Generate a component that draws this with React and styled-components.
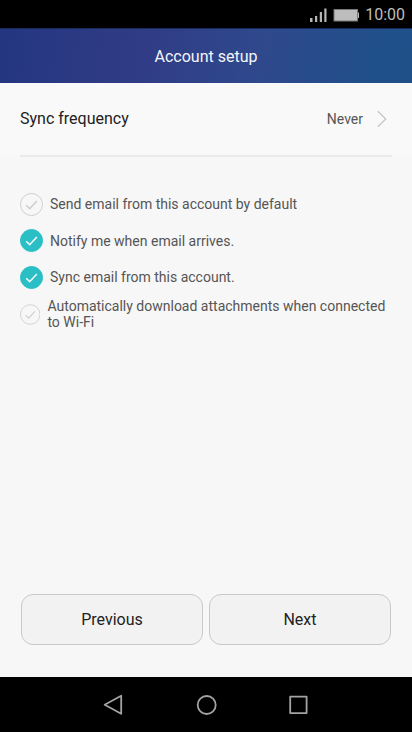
import React, { useState } from "react";
import styled, { createGlobalStyle } from "styled-components";

const GlobalStyle = createGlobalStyle`
  * {
    box-sizing: border-box;
  }

  body {
    margin: 0;
    background: #000;
    font-family: Roboto, "Noto Sans", sans-serif;
  }
`;

const Screen = styled.div`
  display: flex;
  flex-direction: column;
  width: 412px;
  height: 732px;
  overflow: hidden;
  background: #f7f7f7;
`;

const StatusBar = styled.div`
  display: flex;
  justify-content: flex-end;
  align-items: center;
  height: 28px;
  padding: 2px 7px 0 0;
  background: #000;
`;

const Clock = styled.span`
  margin-left: 6px;
  color: #bdbdbd;
  font-size: 16px;
  line-height: 20px;
`;

const Header = styled.header`
  height: 55px;
  border-top: 1px solid #172a5c;
  background: linear-gradient(100deg, #243681 0%, #303b85 32%, #2f488c 62%, #1f5089 92%, #205088 100%);
`;

const Title = styled.h1`
  margin: 0;
  color: #f4f5fb;
  font-size: 16px;
  font-weight: 400;
  line-height: 56px;
  text-align: center;
`;

const Content = styled.main`
  display: flex;
  flex: 1;
  flex-direction: column;
`;

const Setting = styled.div`
  padding: 0 20px;
  background: #f9f9f9;
`;

const SettingRow = styled.div`
  display: flex;
  align-items: center;
  height: 74px;
  border-bottom: 2px solid #ebebeb;
`;

const SettingLabel = styled.span`
  flex: 1;
  color: #222;
  font-size: 16px;
  line-height: 20px;
`;

const SettingValue = styled.span`
  margin-right: 14px;
  color: #555;
  font-size: 14px;
  line-height: 20px;
`;

const Options = styled.ul`
  margin: 0;
  padding: 29px 20px 0;
  list-style: none;
`;

const Option = styled.li`
  display: flex;
  align-items: center;
  height: 36.6px;
  color: #555;
  font-size: 14px;
  line-height: 16px;
  cursor: pointer;
`;

const OptionText = styled.span`
  margin-left: 7px;
`;

const Buttons = styled.div`
  display: flex;
  gap: 6px;
  margin: auto 21px 32px;
`;

const Button = styled.button`
  flex: 1;
  height: 51px;
  padding: 0;
  border: 1px solid #c9c9c9;
  border-radius: 12px;
  background: #f2f2f2;
  color: #222;
  font-family: inherit;
  font-size: 16px;
`;

const NavBar = styled.nav`
  display: flex;
  justify-content: center;
  gap: 68px;
  align-items: center;
  height: 55px;
  background: #000;
`;

const Check = ({ checked }) => (
  <svg width="23" height="23" viewBox="0 0 23 23" fill="none">
    <circle
      cx="11.5"
      cy="11.5"
      r="11"
      fill={checked ? "#2abfc5" : "none"}
      stroke={checked ? "#2abfc5" : "#cfcfcf"}
    />
    <path d="M6.2 12.2l3.5 3.4 7.2-7.6" stroke={checked ? "#f0fbfb" : "#cfcfcf"} strokeWidth="1.5" />
  </svg>
);

const options = [
  { text: "Send email from this account by default", checked: false },
  { text: "Notify me when email arrives.", checked: true },
  { text: "Sync email from this account.", checked: true },
  { text: "Automatically download attachments when connected to Wi-Fi", checked: false },
];

const App = () => {
  const [items, setItems] = useState(options);

  const toggle = (index) => {
    setItems(items.map((item, i) => (i === index ? { ...item, checked: !item.checked } : item)));
  };

  return (
    <>
      <GlobalStyle />
      <Screen>
        <StatusBar>
          <svg width="50" height="16" viewBox="0 0 50 16">
            <path d="M1 11h2.5v4H1zM6 9h2.2v6H6zM10.8 5h2.2v10h-2.2zM15.3 1.5h2.2V15h-2.2z" fill="#b5b5b5" />
            <rect x="25" y="2.5" width="23.5" height="11.5" fill="#bdbdbd" stroke="#777" />
            <path d="M49 5.5h1.2v5.5H49z" fill="#b5b5b5" />
          </svg>
          <Clock>10:00</Clock>
        </StatusBar>
        <Header>
          <Title>Account setup</Title>
        </Header>
        <Content>
          <Setting>
            <SettingRow>
              <SettingLabel>Sync frequency</SettingLabel>
              <SettingValue>Never</SettingValue>
              <svg width="15" height="18" viewBox="0 0 15 18" fill="none">
                <path d="M.8 1.2L8.8 9l-8 7.8" stroke="#c4c4c4" strokeWidth="1.2" />
              </svg>
            </SettingRow>
          </Setting>
          <Options>
            {items.map((item, index) => (
              <Option key={index} onClick={() => toggle(index)}>
                <Check checked={item.checked} />
                <OptionText>{item.text}</OptionText>
              </Option>
            ))}
          </Options>
          <Buttons>
            <Button>Previous</Button>
            <Button>Next</Button>
          </Buttons>
        </Content>
        <NavBar>
          <svg width="24" height="24" viewBox="0 0 24 24" fill="none" stroke="#a3a3a3" strokeWidth="1.8">
            <path d="M19.2 2.8v18L2.7 11.8z" strokeLinejoin="round" />
          </svg>
          <svg width="24" height="24" viewBox="0 0 24 24" fill="none" stroke="#a3a3a3" strokeWidth="1.8">
            <circle cx="12.7" cy="12" r="9" />
          </svg>
          <svg width="24" height="24" viewBox="0 0 24 24" fill="none" stroke="#a3a3a3" strokeWidth="1.8">
            <rect x="4.2" y="3.7" width="16.4" height="16.4" strokeLinejoin="round" />
          </svg>
        </NavBar>
      </Screen>
    </>
  );
};

export default App;
